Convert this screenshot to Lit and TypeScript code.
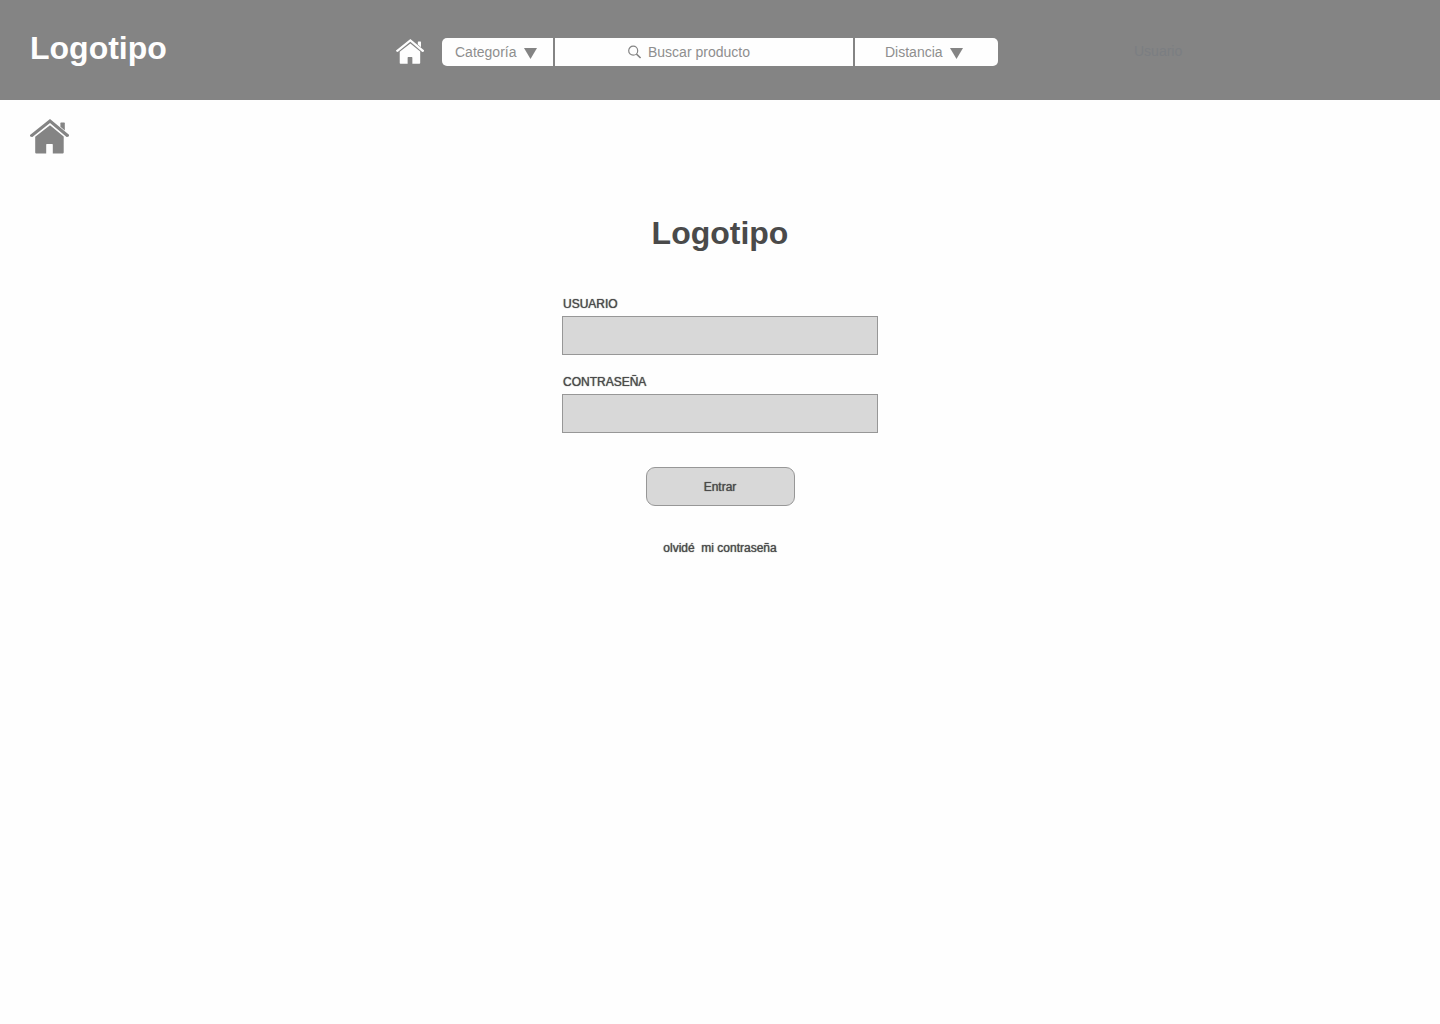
import { LitElement, html, css, svg } from "lit";
import { customElement } from "lit/decorators.js";

const house = svg`
  <path d="M20 0 L39.2 16 Q39.4 18 36.6 18 L20 4 L2.4 18 Q-0.4 18 0 16 Z" />
  <path d="M20 6.2 L33.7 17.4 V33.4 Q33.7 34.5 32.6 34.5 H22.8 V25.6 Q22.8 25 22.2 25 H16.8 Q16.2 25 16.2 25.6 V34.5 H6.2 Q5.2 34.5 5.2 33.4 V17.8 Z" />
  <path d="M30.4 4.2 Q30.4 3.6 31 3.6 H34.2 Q34.8 3.6 34.8 4.2 V11.4 L30.4 7.8 Z" />
`;

const arrow = html`
  <svg class="arrow" viewBox="0 0 13 11" aria-hidden="true"><path d="M0 0 H13 L6.5 11 Z" /></svg>
`;

@customElement("app-root")
export class AppRoot extends LitElement {
  static styles = css`
    :host {
      display: block;
      min-height: 100vh;
      background: #fefefe;
      color: #4a4a4a;
      font-family: "Liberation Sans", Arial, sans-serif;
      font-size: 12px;
      line-height: 16px;
    }
    * {
      box-sizing: border-box;
    }
    a {
      color: inherit;
      text-decoration: none;
    }
    svg {
      display: block;
      fill: currentColor;
    }
    .header {
      display: grid;
      grid-template-columns: 1fr minmax(auto, 556px) 1fr;
      align-items: start;
      padding: 28px 0 32px;
      min-height: 100px;
      background: #848484;
    }
    .brand {
      display: flex;
      align-items: center;
      justify-content: space-between;
      padding: 0 18px 0 30px;
      color: #fefefe;
    }
    .logo {
      font-size: 32px;
      line-height: 40px;
      font-weight: bold;
    }
    .home-small {
      width: 28px;
      margin-top: 7px;
    }
    .search {
      display: grid;
      grid-template-columns: 111fr 298fr 143fr;
      gap: 2px;
      height: 28px;
      margin-top: 10px;
      border-radius: 5px;
      overflow: hidden;
      color: #848484;
    }
    .segment {
      display: grid;
      align-items: center;
      background: #fefefe;
    }
    .segment > * {
      grid-area: 1 / 1;
    }
    select,
    input,
    button {
      appearance: none;
      margin: 0;
      border: 0;
      border-radius: 0;
      font: inherit;
      color: inherit;
      background: transparent;
    }
    .select,
    .query,
    .user {
      font-size: 14px;
      line-height: 20px;
      color: #8e8e8e;
    }
    .select {
      width: 100%;
      height: 28px;
      padding: 0 0 0 13px;
    }
    .arrow {
      width: 13px;
      height: 11px;
      margin: 2px 0 0 82px;
      pointer-events: none;
    }
    .distance .select {
      padding-left: 30px;
    }
    .distance .arrow {
      margin-left: 95px;
    }
    .lens {
      width: 14px;
      height: 14px;
      margin-left: 73px;
      fill: none;
      stroke: currentColor;
      pointer-events: none;
    }
    .query {
      width: 100%;
      height: 28px;
      padding: 0 0 0 93px;
    }
    .query::placeholder {
      color: #8e8e8e;
      opacity: 1;
    }
    .user {
      justify-self: start;
      margin: 13px 0 0 136px;
      color: #7b7e82;
    }
    .main {
      display: flex;
      flex-direction: column;
      padding: 19px 30px;
    }
    .home {
      align-self: start;
      color: #848484;
    }
    .home-large {
      width: 39px;
    }
    .login {
      display: flex;
      flex-direction: column;
      align-items: center;
      align-self: center;
      width: 100%;
      max-width: 316px;
      margin-top: 59px;
      text-shadow: 0 0 1px #4a4a4a;
    }
    .title {
      margin: 0 0 43px;
      font-size: 32px;
      line-height: 40px;
      text-shadow: none;
    }
    .field {
      display: flex;
      flex-direction: column;
      gap: 4px;
      width: 100%;
      margin-bottom: 19px;
    }
    .field label {
      align-self: start;
      padding-left: 1px;
    }
    .box {
      width: 100%;
      height: 39px;
      padding: 0 10px;
      border: 1px solid #979797;
      background: #d8d8d8;
    }
    .submit {
      width: 149px;
      height: 39px;
      margin: 15px 0 34px;
      border: 1px solid #979797;
      border-radius: 9px;
      background: #d8d8d8;
      text-shadow: inherit;
    }
    .forgot {
      white-space: pre;
    }
  `;

  render() {
    return html`
      <header class="header">
        <div class="brand">
          <a class="logo" href="#">Logotipo</a>
          <a href="#" aria-label="Inicio">
            <svg class="home-small" viewBox="0 0 39 35" aria-hidden="true">${house}</svg>
          </a>
        </div>
        <form class="search" role="search">
          <div class="segment">
            <select class="select" aria-label="Categoría"><option>Categoría</option></select>
            ${arrow}
          </div>
          <div class="segment">
            <input class="query" type="text" placeholder="Buscar producto" aria-label="Buscar producto" />
            <svg class="lens" viewBox="0 0 14 14" aria-hidden="true">
              <circle cx="5.2" cy="5.7" r="4.5" stroke-width="1.2" />
              <path d="M8.4 9 L12.6 13" stroke-width="1.7" />
            </svg>
          </div>
          <div class="segment distance">
            <select class="select" aria-label="Distancia"><option>Distancia</option></select>
            ${arrow}
          </div>
        </form>
        <a class="user" href="#">Usuario</a>
      </header>
      <main class="main">
        <a class="home" href="#" aria-label="Inicio">
          <svg class="home-large" viewBox="0 0 39 35" aria-hidden="true">${house}</svg>
        </a>
        <form class="login">
          <h1 class="title">Logotipo</h1>
          <div class="field">
            <label for="user">USUARIO</label>
            <input class="box" id="user" type="text" autocomplete="username" />
          </div>
          <div class="field">
            <label for="password">CONTRASEÑA</label>
            <input class="box" id="password" type="password" autocomplete="current-password" />
          </div>
          <button class="submit" type="button">Entrar</button>
          <a class="forgot" href="#">olvidé  mi contraseña</a>
        </form>
      </main>
    `;
  }
}
